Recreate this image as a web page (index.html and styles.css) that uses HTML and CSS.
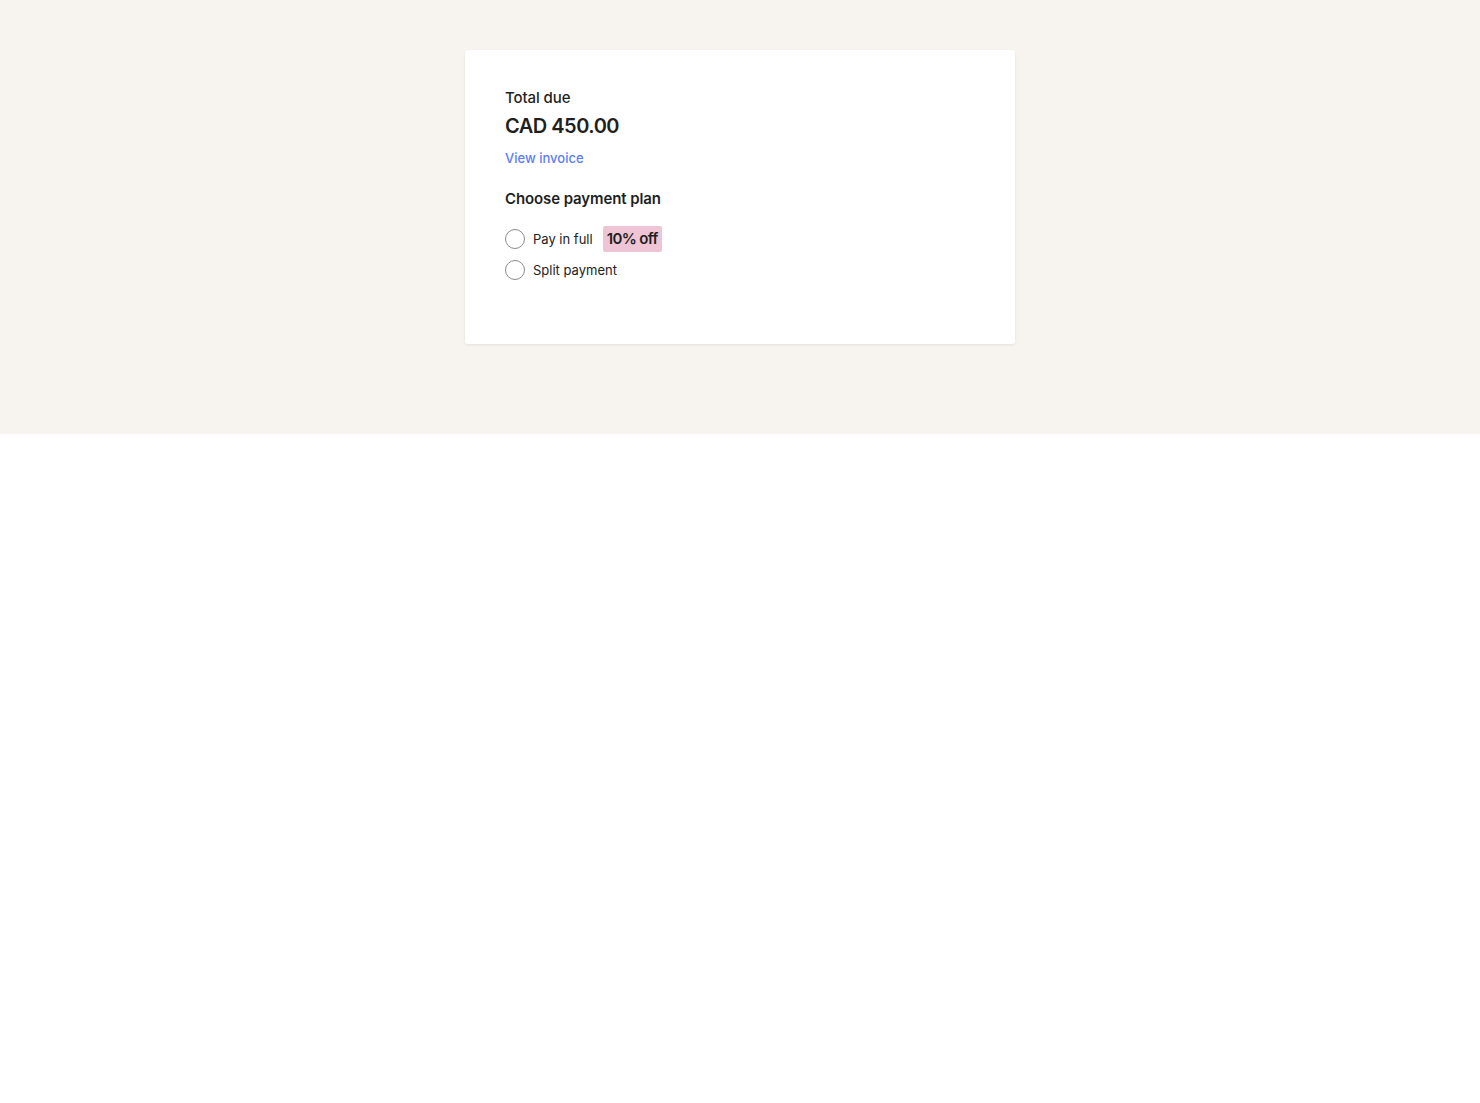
FILE: index.html
```html
<!DOCTYPE html>
<html lang="en">
<head>
<meta charset="utf-8">
<title>Payment</title>
<link rel="stylesheet" href="styles.css">
</head>
<body>
<div class="page">
  <div class="card">
    <div class="total-label">Total due</div>
    <div class="total-amount">CAD 450.00</div>
    <a class="invoice-link" href="#">View invoice</a>
    <div class="plan-title">Choose payment plan</div>
    <div class="options">
      <label class="option">
        <span class="radio"></span>
        <span class="option-text">Pay in full</span>
        <span class="badge">10% off</span>
      </label>
      <label class="option">
        <span class="radio"></span>
        <span class="option-text">Split payment</span>
      </label>
    </div>
  </div>
</div>
</body>
</html>
```
FILE: styles.css
```css
html, body {
  margin: 0;
  padding: 0;
  background: #ffffff;
  font-family: Inter, "Noto Sans", "Liberation Sans", sans-serif;
  color: #1f1f1f;
}
.page {
  background: #f7f4ef;
  height: 434px;
  box-sizing: border-box;
  padding-top: 50px;
}
.card {
  width: 550px;
  height: 294px;
  box-sizing: border-box;
  margin: 0 auto;
  background: #fff;
  border-radius: 3px;
  box-shadow: 0 1px 3px rgba(0,0,0,0.08);
  padding: 38px 40px 40px;
}
.total-label {
  font-size: 15px;
  font-weight: 500;
  line-height: 20px;
  letter-spacing: -0.1px;
}
.total-amount {
  font-size: 20px;
  font-weight: 600;
  line-height: 26px;
  margin-top: 5px;
  letter-spacing: -0.5px;
}
.invoice-link {
  display: inline-block;
  font-size: 13px;
  font-weight: 500;
  color: #5b7ef7;
  text-decoration: none;
  line-height: 16px;
  margin-top: 11px;
}
.plan-title {
  font-size: 15px;
  font-weight: 600;
  line-height: 20px;
  margin-top: 22px;
  letter-spacing: -0.1px;
}
.options {
  display: flex;
  flex-direction: column;
  gap: 5px;
  margin-top: 17px;
}
.option {
  display: flex;
  align-items: center;
  gap: 8px;
  font-size: 13px;
  line-height: 26px;
}
.radio {
  width: 18px;
  height: 18px;
  border: 1px solid #8a8a8f;
  border-radius: 50%;
  box-sizing: content-box;
}
.option-text {
  color: #222;
}
.badge {
  margin-left: 2px;
  background: #efc5d6;
  border-radius: 2px;
  font-size: 15px;
  font-weight: 600;
  padding: 0 4px;
  line-height: 26px;
  letter-spacing: -0.6px;
}
```
